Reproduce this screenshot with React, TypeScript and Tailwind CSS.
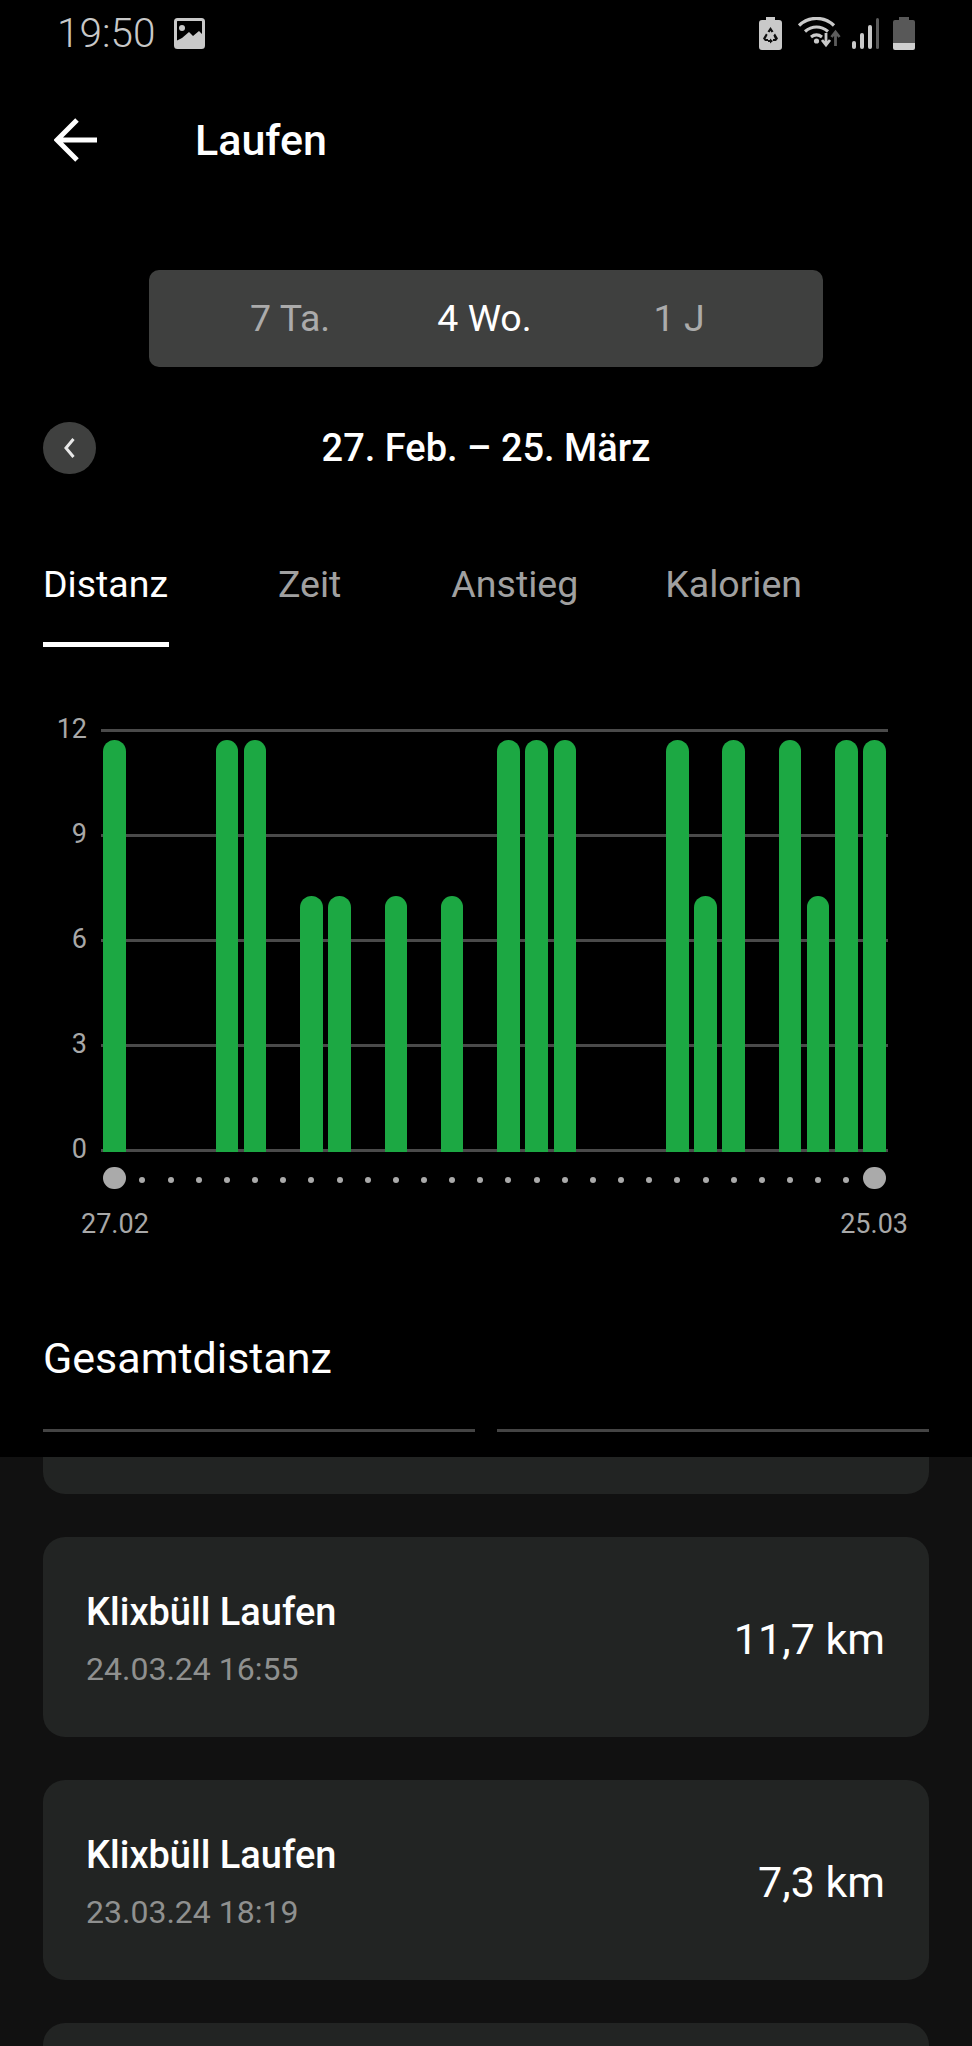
const bars = [
  2, 0, 0, 0, 2, 2, 0, 1, 1, 0, 1, 0, 1, 0, 2, 2, 2, 0, 0, 0, 2, 1, 2, 0, 2, 1, 2, 2,
]
const gridRows = ['12', '9', '6', '3', '0']
const runs = [
  { date: '24.03.24 16:55', distance: '11,7 km' },
  { date: '23.03.24 18:19', distance: '7,3 km' },
]

function StatusIcons() {
  return (
    <div className="flex items-center h-[33px]">
      <svg width="23" height="33" viewBox="0 0 23 33" className="ml-[1px]">
        <path d="M7 0h9v3h4a3 3 0 0 1 3 3v24a3 3 0 0 1-3 3H3a3 3 0 0 1-3-3V6a3 3 0 0 1 3-3h4z" fill="#c9c9c9" />
        <path d="M11.500 10l3 4.500-2 1-1-1.800-1 1.800-2-1zM16 16.500l3 5-2 2.500h-3v-2h2l-1.600-3.500zM7 16.500l1.600 1.200L6.500 22h2.500v2H6l-2-2.500zM11 21.500l3 2.500-3 2.500V25H9v-2h2z" fill="#111" />
      </svg>
      <svg width="44" height="33" viewBox="0 0 44 33" className="ml-[15px]">
        <path d="M2 8.500C12 -1 27 -1 37 8.500M8 14.500c7-6 16-6 23 0M14 20c4-3 7-3 11 0" fill="none" stroke="#c9c9c9" strokeWidth="3.200" />
        <circle cx="19.500" cy="24" r="2.600" fill="#c9c9c9" />
        <path d="M29 16v11M25 23l4 5 4-5" fill="none" stroke="#c9c9c9" strokeWidth="2.800" />
        <path d="M38.500 29V16M34.500 20l4-5 4 5" fill="none" stroke="#5c5c5c" strokeWidth="2.800" />
      </svg>
      <svg width="28" height="31" viewBox="0 0 28 31" className="ml-[11px]">
        <rect x="0" y="23" width="4" height="8" rx="2" fill="#c9c9c9" />
        <rect x="8" y="15" width="4" height="16" rx="2" fill="#c9c9c9" />
        <rect x="16" y="7" width="4" height="24" rx="2" fill="#c9c9c9" />
        <rect x="24" y="0" width="3" height="31" rx="1.500" fill="#5c5c5c" />
      </svg>
      <svg width="22" height="33" viewBox="0 0 22 33" className="ml-[13px]">
        <path d="M6 0h10v3h4a2 2 0 0 1 2 2v21H0V5a2 2 0 0 1 2-2h4z" fill="#585858" />
        <path d="M0 26h22v5a2 2 0 0 1-2 2H2a2 2 0 0 1-2-2z" fill="#cfcfcf" />
      </svg>
    </div>
  )
}

export default function App() {
  return (
    <div className="w-full h-[2046px] overflow-hidden bg-black flex flex-col font-['Roboto',sans-serif]">
      <div className="h-[64px] flex items-center justify-between pl-[57px] pr-[57px] pt-[2px]">
        <div className="flex items-center">
          <span className="text-[40.500px] leading-none font-light text-[#c8c8c8]">19:50</span>
          <svg width="31" height="31" viewBox="0 0 31 31" className="ml-[19px]">
            <rect x="1.500" y="1.500" width="28" height="28" rx="2" fill="#000" stroke="#c9c9c9" strokeWidth="3" />
            <circle cx="8" cy="10" r="3" fill="#c9c9c9" />
            <path d="M2 23l6-3 7-6 4 4 6-5 5 5v11H2z" fill="#c9c9c9" />
          </svg>
        </div>
        <StatusIcons />
      </div>

      <div className="h-[156px] flex items-center pl-[54px] pb-[3px]">
        <svg width="44" height="44" viewBox="0 0 44 44" fill="none" stroke="white" strokeWidth="5" className="mb-[1px]">
          <path d="M43 22H4M23 2L3 22l20 20" />
        </svg>
        <span className="ml-[97px] text-[43px] leading-none font-medium text-white">Laufen</span>
      </div>

      <div className="mt-[50px] ml-[149px] w-[674px] h-[97px] rounded-[10px] bg-[#3f403f] flex items-center text-[37.500px] leading-none text-[#ababab]">
        <span className="ml-[101px]">7 Ta.</span>
        <span className="ml-[107px] text-white">4 Wo.</span>
        <span className="ml-[122px]">1 J</span>
      </div>

      <div className="relative mt-[55px] h-[52px] flex items-center justify-center">
        <div className="absolute left-[43px] top-0 w-[53px] h-[52px] rounded-full bg-[#3f403f] flex items-center justify-center">
          <svg width="13" height="22" viewBox="0 0 13 22" fill="none" stroke="#e8e8e8" strokeWidth="3">
            <path d="M10.500 2L3 11l7.500 9" />
          </svg>
        </div>
        <span className="text-[38px] leading-none font-medium text-white">27. Feb. – 25. März</span>
      </div>

      <div className="mt-[90px] pl-[43px] flex text-[37.500px] leading-[40px] text-[#a0a0a0]">
        <div className="flex flex-col">
          <span className="text-white">Distanz</span>
          <div className="mt-[38px] w-[126px] h-[5px] bg-white" />
        </div>
        <span className="ml-[109px]">Zeit</span>
        <span className="ml-[110px]">Anstieg</span>
        <span className="ml-[87px]">Kalorien</span>
      </div>

      <div className="relative mt-[68px] h-[450px] flex flex-col justify-between">
        {gridRows.map((label) => (
          <div key={label} className="h-[30px] flex items-center">
            <span className="w-[87px] pb-[2px] text-right text-[27px] leading-[30px] text-[#a8a8a8]">{label}</span>
            <div className="ml-[14px] w-[787px] h-[3px] bg-[#4a4a4a]" />
          </div>
        ))}
        <div className="absolute left-[103px] bottom-[13px] w-[783px] flex justify-between items-end">
          {bars.map((b, i) => (
            <div
              key={i}
              className={
                b === 2
                  ? 'w-[22.5px] h-[412px] rounded-t-full bg-[#1ca843]'
                  : b === 1
                    ? 'w-[22.5px] h-[256px] rounded-t-full bg-[#1ca843]'
                    : 'w-[22.5px]'
              }
            />
          ))}
        </div>
      </div>

      <div className="mt-[1px] ml-[103px] w-[783px] h-[23px] flex justify-between items-end">
        {bars.map((_, i) => (
          <div key={i} className="w-[22.5px] flex justify-center">
            {i === 0 || i === bars.length - 1 ? (
              <div className="w-[23px] h-[22px] shrink-0 rounded-full bg-[#aaaaaa]" />
            ) : (
              <div className="w-[6px] h-[6px] mb-[6px] rounded-full bg-[#aaaaaa]" />
            )}
          </div>
        ))}
      </div>

      <div className="mt-[20px] pl-[81px] w-[908px] flex justify-between text-[27px] leading-[30px] text-[#a8a8a8]">
        <span>27.02</span>
        <span>25.03</span>
      </div>

      <div className="mt-[94px] pl-[43px] text-[43px] leading-[50px] text-white">Gesamtdistanz</div>

      <div className="mt-[46px] mx-[43px] flex gap-[22px]">
        <div className="flex-1 h-[3px] bg-[#444444]" />
        <div className="flex-1 h-[3px] bg-[#444444]" />
      </div>

      <div className="mt-[25px] flex-1 bg-[#111111] px-[43px] flex flex-col gap-[43px] overflow-hidden">
        <div className="h-[37px] shrink-0 rounded-b-[22px] bg-[#222423]" />
        {runs.map((run) => (
          <div key={run.date} className="h-[200px] shrink-0 rounded-[22px] bg-[#222423] flex items-center justify-between pl-[43px] pr-[44px]">
            <div className="flex flex-col pt-[4px]">
              <span className="text-[38px] leading-[44px] font-medium text-white">Klixbüll Laufen</span>
              <span className="mt-[15px] text-[32px] leading-[40px] text-[#8f908f]">{run.date}</span>
            </div>
            <span className="pt-[4px] text-[43px] leading-none text-white">{run.distance}</span>
          </div>
        ))}
        <div className="h-[60px] shrink-0 rounded-t-[22px] bg-[#222423]" />
      </div>
    </div>
  )
}
